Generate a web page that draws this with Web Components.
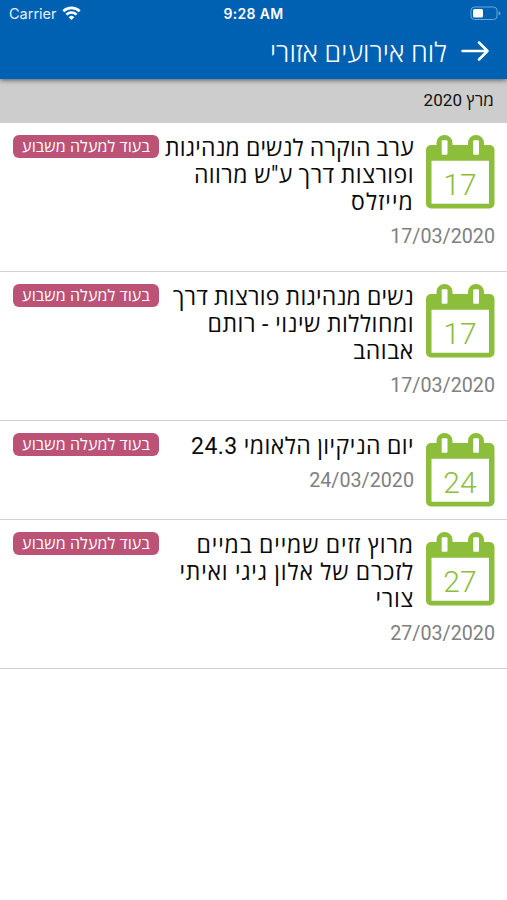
<!DOCTYPE html>
<html lang="he" dir="rtl">
<head>
<meta charset="utf-8">
<title>לוח אירועים אזורי</title>
<style>
  body {
    margin: 0;
    min-height: 100vh;
    background: #fff;
    font-family: Roboto, "Open Sans", "DejaVu Sans", sans-serif;
  }

  .line {
    display: block;
    width: max-content;
    white-space: nowrap;
  }
</style>
</head>
<body>
  <app-header>
    <status-bar slot="status" carrier="Carrier" time="9:28 AM"></status-bar>
    לוח אירועים אזורי
  </app-header>
  <month-header>מרץ 2020</month-header>
  <main>
    <event-item day="17" date="17/03/2020" badge="בעוד למעלה משבוע">
      <span class="line" style="letter-spacing: 0.17px">ערב הוקרה לנשים מנהיגות</span>
      <span class="line" style="letter-spacing: 0.45px">ופורצות דרך ע"ש מרווה</span>
      <span class="line" style="letter-spacing: 1.1px">מייזלס</span>
    </event-item>
    <event-item day="17" date="17/03/2020" badge="בעוד למעלה משבוע">
      <span class="line" style="letter-spacing: 0.23px">נשים מנהיגות פורצות דרך</span>
      <span class="line" style="letter-spacing: 0.5px">ומחוללות שינוי - רותם</span>
      <span class="line" style="letter-spacing: 0.6px">אבוהב</span>
    </event-item>
    <event-item day="24" date="24/03/2020" badge="בעוד למעלה משבוע">
      <span class="line" style="letter-spacing: 0.43px">יום הניקיון הלאומי 24.3</span>
    </event-item>
    <event-item day="27" date="27/03/2020" badge="בעוד למעלה משבוע">
      <span class="line" style="letter-spacing: 0.85px">מרוץ זזים שמיים במיים</span>
      <span class="line" style="letter-spacing: 0.8px">לזכרם של אלון גיגי ואיתי</span>
      <span class="line" style="letter-spacing: 0.7px">צורי</span>
    </event-item>
  </main>

<script>
class StatusBar extends HTMLElement {
  constructor() {
    super();
    this.attachShadow({ mode: "open" });
    this.shadowRoot.innerHTML = `
      <style>
        :host {
          display: grid;
          grid-template-columns: 1fr auto 1fr;
          align-items: center;
          direction: ltr;
          height: 27px;
          padding: 0 6px 0 9px;
          color: #fff;
          font: 14.5px/27px Inter, sans-serif;
        }

        .left {
          display: flex;
          align-items: center;
          gap: 5px;
          color: #e4f1ff;
        }

        .time {
          font-size: 14px;
          font-weight: 600;
          letter-spacing: 0.3px;
          margin-right: 3px;
        }

        .battery {
          justify-self: end;
        }

        svg {
          display: block;
        }
      </style>
      <div class="left">
        <span class="carrier"></span>
        <svg width="19" height="15" viewBox="0 0 19 15" fill="none" stroke="#fff" stroke-width="2.6">
          <path d="M1.3 5.2a11.7 11.7 0 0 1 16.4 0M4.4 8.6a7.4 7.4 0 0 1 10.2 0"/>
          <path d="M9.5 14L6.7 11.2a4 4 0 0 1 5.6 0z" fill="#fff" stroke="none"/>
        </svg>
      </div>
      <span class="time"></span>
      <svg class="battery" width="31" height="15" viewBox="0 0 31 15">
        <rect x="1" y="1" width="26" height="12.5" rx="3.5" fill="none" stroke="#6ba4d8"/>
        <rect x="3" y="3" width="10" height="8.5" rx="1.5" fill="#fff"/>
        <path d="M28.6 5v4.6q1.8-.6 1.8-2.3t-1.8-2.3z" fill="#6ba4d8"/>
      </svg>
    `;
  }

  connectedCallback() {
    this.shadowRoot.querySelector(".carrier").textContent = this.getAttribute("carrier");
    this.shadowRoot.querySelector(".time").textContent = this.getAttribute("time");
  }
}

class AppHeader extends HTMLElement {
  constructor() {
    super();
    this.attachShadow({ mode: "open" });
    this.shadowRoot.innerHTML = `
      <style>
        :host {
          display: block;
          position: relative;
          height: 79px;
          background: #0060b1;
          color: #fff;
          box-shadow: 0 1px 5px rgba(0, 0, 0, 0.6);
        }

        .bar {
          display: flex;
          align-items: center;
          gap: 14px;
          height: 48px;
          padding: 0 18px;
        }

        h1 {
          margin: 0;
          padding-top: 3px;
          font-size: 27px;
          font-weight: 300;
          line-height: 48px;
          letter-spacing: 0.05px;
          white-space: nowrap;
        }
      </style>
      <slot name="status"></slot>
      <div class="bar">
        <svg width="28" height="20" viewBox="0 0 28 20" fill="none" stroke="#fff" stroke-width="2.5">
          <path d="M1.5 10h25M18 1.5l8.5 8.5-8.5 8.5" stroke-linecap="round" stroke-linejoin="round"/>
        </svg>
        <h1><slot></slot></h1>
      </div>
    `;
  }
}

class MonthHeader extends HTMLElement {
  constructor() {
    super();
    this.attachShadow({ mode: "open" });
    this.shadowRoot.innerHTML = `
      <style>
        :host {
          display: block;
          height: 44px;
          padding: 0 13px;
          background: #cdcdcd;
          color: #111;
          font-size: 17px;
          line-height: 43px;
          letter-spacing: 0.1px;
        }
      </style>
      <slot></slot>
    `;
  }
}

class CalendarDay extends HTMLElement {
  constructor() {
    super();
    this.attachShadow({ mode: "open" });
    this.shadowRoot.innerHTML = `
      <style>
        :host {
          display: block;
          width: 69px;
          height: 75px;
        }

        svg {
          display: block;
        }

        text {
          font: 300 30px Roboto, sans-serif;
          direction: ltr;
        }
      </style>
      <svg width="69" height="75" viewBox="0 0 69 75" fill="#8cbd3b">
        <path fill-rule="evenodd" d="M5 10h5.5V8a8 8 0 0 1 16 0v2h15.500V8a8 8 0 0 1 16 0v2h5.500a5 5 0 0 1 5 5V68.500a5 5 0 0 1-5 5H5a5 5 0 0 1-5-5V15a5 5 0 0 1 5-5zM5.500 25.700V68.700H63V25.700z"/>
        <rect x="15.7" y="5.3" width="5.8" height="14.5" rx="1" fill="#fff"/>
        <rect x="47.2" y="5.3" width="5.8" height="14.5" rx="1" fill="#fff"/>
        <text x="34" y="60" text-anchor="middle"></text>
      </svg>
    `;
  }

  connectedCallback() {
    this.shadowRoot.querySelector("text").textContent = this.getAttribute("day");
  }
}

class EventBadge extends HTMLElement {
  constructor() {
    super();
    this.attachShadow({ mode: "open" });
    this.shadowRoot.innerHTML = `
      <style>
        :host {
          display: block;
          box-sizing: border-box;
          width: 146px;
          height: 23px;
          border-radius: 6px;
          background: #bc5276;
          color: #fff;
          font-size: 16px;
          line-height: 23px;
          letter-spacing: 0.12px;
          text-align: center;
          white-space: nowrap;
        }
      </style>
      <slot></slot>
    `;
  }
}

class EventItem extends HTMLElement {
  constructor() {
    super();
    this.attachShadow({ mode: "open" });
    this.shadowRoot.innerHTML = `
      <style>
        :host {
          display: flow-root;
          padding: 12px 12px 11px 13px;
          border-bottom: 1px solid #d2d2d2;
        }

        calendar-day {
          float: right;
          margin-left: 12px;
        }

        event-badge {
          float: left;
        }

        .title {
          display: flow-root;
          color: #0a0a0a;
          font-size: 23px;
          line-height: 27px;
        }

        .date {
          margin: 7px 0 10px;
          color: #808080;
          font-size: 19.7px;
          line-height: 27px;
        }
      </style>
      <calendar-day></calendar-day>
      <event-badge></event-badge>
      <div class="title"><slot></slot></div>
      <div class="date"></div>
    `;
  }

  connectedCallback() {
    this.shadowRoot.querySelector("calendar-day").setAttribute("day", this.getAttribute("day"));
    this.shadowRoot.querySelector("event-badge").textContent = this.getAttribute("badge");
    this.shadowRoot.querySelector(".date").textContent = this.getAttribute("date");
  }
}

customElements.define("status-bar", StatusBar);
customElements.define("app-header", AppHeader);
customElements.define("month-header", MonthHeader);
customElements.define("event-badge", EventBadge);
customElements.define("event-item", EventItem);
customElements.define("calendar-day", CalendarDay);
</script>
</body>
</html>
